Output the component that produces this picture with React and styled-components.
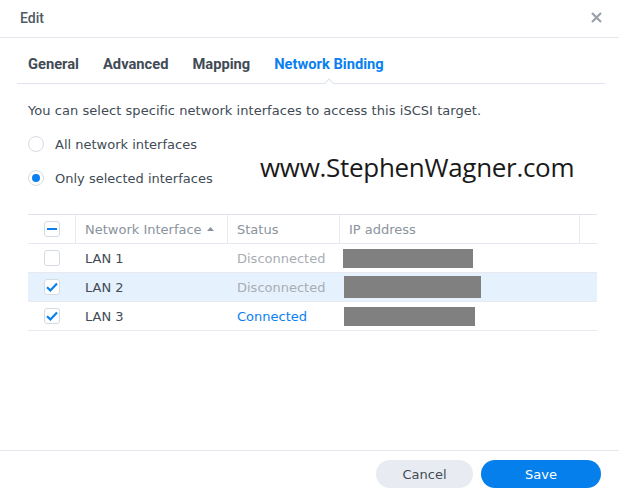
import React from 'react';
import styled, { createGlobalStyle } from 'styled-components';

const GlobalStyle = createGlobalStyle`
  html, body {
    margin: 0;
    padding: 0;
    background: #fff;
  }
  body {
    font-family: "DejaVu Sans", Verdana, sans-serif;
    font-size: 13px;
    color: #414b55;
  }
`;

const Dialog = styled.div`
  width: 619px;
  height: 492px;
  display: flex;
  flex-direction: column;
  background: #fff;
  position: relative;
  box-sizing: border-box;
`;

const TitleBar = styled.div`
  height: 38px;
  box-sizing: border-box;
  display: flex;
  align-items: center;
  justify-content: space-between;
  padding: 0 17px 0 20px;
  border-bottom: 1px solid #e3e7ee;
`;

const Title = styled.div`
  font-family: Roboto, "Liberation Sans", sans-serif;
  font-size: 14px;
  font-weight: 500;
  color: #505a64;
  margin-top: -2px;
`;

const CloseButton = styled.button`
  border: none;
  background: none;
  padding: 0;
  width: 11px;
  height: 11px;
  margin-top: -2px;
  display: flex;
  align-items: center;
  justify-content: center;
  cursor: pointer;
`;

const Body = styled.div`
  flex: 1;
  padding: 0 22px 0 28px;
  display: flex;
  flex-direction: column;
`;

const Tabs = styled.div`
  display: flex;
  gap: 24px;
  height: 45px;
  align-items: flex-end;
  margin: 0 -8px 0 -11px;
  padding: 0 11px;
  border-bottom: 1px solid #dfe4ec;
  position: relative;
`;

const Tab = styled.div`
  font-family: Roboto, "Liberation Sans", sans-serif;
  font-weight: 700;
  font-size: 14.7px;
  color: ${p => (p.$active ? '#0a80ef' : '#414b55')};
  padding-bottom: 10px;
  position: relative;
  cursor: pointer;
`;

const Notch = styled.span`
  position: absolute;
  left: 50%;
  bottom: -1px;
  width: 8px;
  height: 8px;
  margin-left: -4px;
  transform: translateY(4px) rotate(45deg);
  background: #fff;
  border-left: 1px solid #dfe4ec;
  border-top: 1px solid #dfe4ec;
  box-sizing: border-box;
`;

const Description = styled.p`
  margin: 19px 0 0;
  line-height: 16px;
  letter-spacing: 0.05px;
  color: #414b55;
`;

const RadioGroup = styled.div`
  display: flex;
  flex-direction: column;
  gap: 18px;
  margin-top: 17px;
`;

const RadioRow = styled.label`
  display: flex;
  align-items: center;
  gap: 11px;
  height: 16px;
  cursor: pointer;
`;

const RadioCircle = styled.span`
  width: 16px;
  height: 16px;
  box-sizing: border-box;
  border-radius: 50%;
  border: 1px solid #d5dbe4;
  background: #fff;
  display: flex;
  align-items: center;
  justify-content: center;
  &::after {
    content: '';
    width: 8px;
    height: 8px;
    border-radius: 50%;
    background: ${p => (p.$checked ? '#0a80ef' : 'transparent')};
  }
`;

const Table = styled.div`
  margin-top: 28px;
  border-top: 1px solid #dfe4ec;
  width: 569px;
`;

const Row = styled.div`
  display: grid;
  grid-template-columns: 48px 152px 112px 240px 17px;
  height: 29px;
  border-bottom: 1px solid #e6eaf0;
  background: ${p => (p.$selected ? '#e5f1fd' : '#fff')};
  box-sizing: border-box;
`;

const HeaderCell = styled.div`
  display: flex;
  align-items: center;
  padding-left: ${p => (p.$check ? '16px' : '9px')};
  color: #8a939e;
  border-right: ${p => (p.$last ? 'none' : '1px solid #e6eaf0')};
  gap: 5px;
`;

const Cell = styled.div`
  display: flex;
  align-items: center;
  padding-left: ${p => (p.$check ? '16px' : '9px')};
  color: ${p => p.$color || '#414b55'};
`;

const Checkbox = styled.span`
  width: 16px;
  height: 16px;
  box-sizing: border-box;
  border: 1px solid #d5dbe4;
  border-radius: 3px;
  background: #fff;
  display: flex;
  align-items: center;
  justify-content: center;
`;

const Dash = styled.span`
  width: 10px;
  height: 2px;
  background: #0a80ef;
`;

const Redacted = styled.div`
  height: ${p => p.$h}px;
  width: ${p => p.$w}px;
  background: #808080;
  margin-left: ${p => p.$x}px;
`;

const Watermark = styled.div`
  position: absolute;
  left: 260px;
  top: 149px;
  font-family: "Open Sans", "Noto Sans", sans-serif;
  font-size: 26px;
  color: #1a1a1a;
  letter-spacing: -0.3px;
`;

const Footer = styled.div`
  height: 42px;
  box-sizing: border-box;
  border-top: 1px solid #e3e7ee;
  display: flex;
  justify-content: flex-end;
  align-items: flex-start;
  gap: 8px;
  padding: 9px 18px 0 0;
`;

const Button = styled.button`
  height: 28px;
  width: ${p => p.$w}px;
  border: none;
  border-radius: 14px;
  font-family: "DejaVu Sans", Verdana, sans-serif;
  font-size: 13px;
  cursor: pointer;
  background: ${p => (p.$primary ? '#057feb' : '#e8ecf2')};
  color: ${p => (p.$primary ? '#fff' : '#414b55')};
`;

const CheckIcon = () => (
  <svg width="12" height="10" viewBox="0 0 12 10">
    <path d="M1 5.2 L4.4 8.4 L11 1.4" fill="none" stroke="#0a80ef" strokeWidth="2.2" />
  </svg>
);

const rows = [
  { name: 'LAN 1', status: 'Disconnected', color: '#a8adb3', checked: false, ip: { w: 130, h: 19, x: 3 } },
  { name: 'LAN 2', status: 'Disconnected', color: '#a8adb3', checked: true, selected: true, ip: { w: 137, h: 22, x: 4 } },
  { name: 'LAN 3', status: 'Connected', color: '#0a80ef', checked: true, ip: { w: 131, h: 19, x: 4 } },
];

const App = () => (
  <Dialog>
    <GlobalStyle />
    <TitleBar>
      <Title>Edit</Title>
      <CloseButton>
        <svg width="11" height="11" viewBox="0 0 11 11">
          <path d="M1 1 L10 10 M10 1 L1 10" stroke="#9aa1aa" strokeWidth="2.2" />
        </svg>
      </CloseButton>
    </TitleBar>
    <Body>
      <Tabs>
        <Tab>General</Tab>
        <Tab>Advanced</Tab>
        <Tab>Mapping</Tab>
        <Tab $active>
          Network Binding
          <Notch />
        </Tab>
      </Tabs>
      <Description>You can select specific network interfaces to access this iSCSI target.</Description>
      <RadioGroup>
        <RadioRow>
          <RadioCircle />
          All network interfaces
        </RadioRow>
        <RadioRow>
          <RadioCircle $checked />
          Only selected interfaces
        </RadioRow>
      </RadioGroup>
      <Table>
        <Row>
          <HeaderCell $check>
            <Checkbox>
              <Dash />
            </Checkbox>
          </HeaderCell>
          <HeaderCell>
            Network Interface
            <svg width="7" height="4" viewBox="0 0 7 4">
              <path d="M0 4 L3.5 0 L7 4 Z" fill="#8a939e" />
            </svg>
          </HeaderCell>
          <HeaderCell>Status</HeaderCell>
          <HeaderCell>IP address</HeaderCell>
          <HeaderCell $last />
        </Row>
        {rows.map(r => (
          <Row key={r.name} $selected={r.selected}>
            <Cell $check>
              <Checkbox>{r.checked && <CheckIcon />}</Checkbox>
            </Cell>
            <Cell>{r.name}</Cell>
            <Cell $color={r.color}>{r.status}</Cell>
            <Cell style={{ paddingLeft: 0 }}>
              <Redacted $w={r.ip.w} $h={r.ip.h} $x={r.ip.x} />
            </Cell>
            <Cell />
          </Row>
        ))}
      </Table>
    </Body>
    <Footer>
      <Button $w={97}>Cancel</Button>
      <Button $w={120} $primary>Save</Button>
    </Footer>
    <Watermark>www.StephenWagner.com</Watermark>
  </Dialog>
);

export default App;
